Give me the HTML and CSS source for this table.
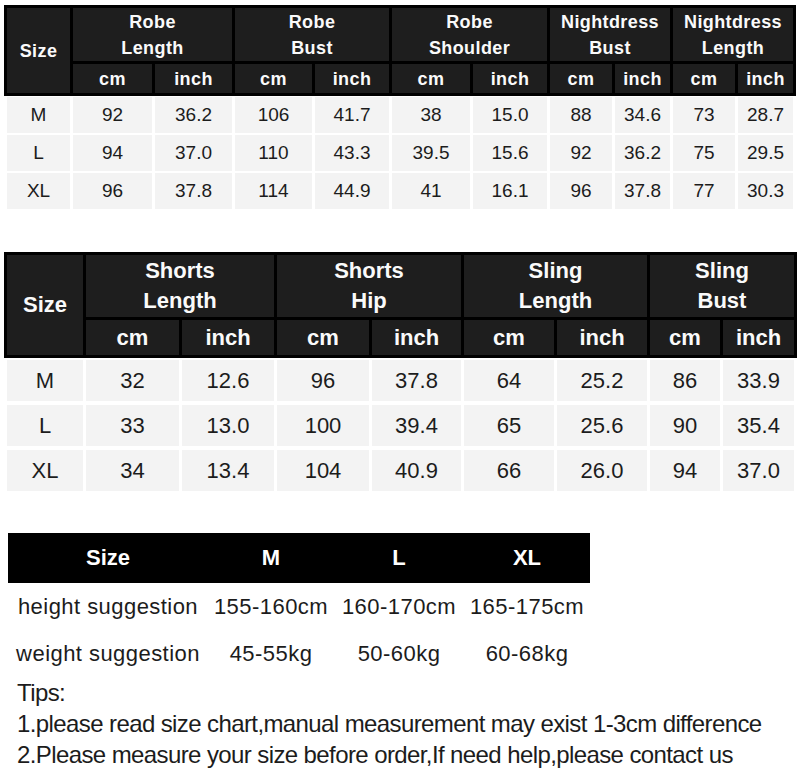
FILE: index.html
```html
<!DOCTYPE html>
<html>
<head>
<meta charset="utf-8">
<link rel="stylesheet" href="styles.css">
</head>
<body>
<div class="page">
  <section class="chart chart-a">
    <div class="head">
      <div class="hc size">Size</div>
      <div class="hc grp">Robe<br>Length</div>
      <div class="hc grp">Robe<br>Bust</div>
      <div class="hc grp">Robe<br>Shoulder</div>
      <div class="hc grp">Nightdress<br>Bust</div>
      <div class="hc grp">Nightdress<br>Length</div>
      <div class="hc">cm</div><div class="hc">inch</div>
      <div class="hc">cm</div><div class="hc">inch</div>
      <div class="hc">cm</div><div class="hc">inch</div>
      <div class="hc">cm</div><div class="hc">inch</div>
      <div class="hc">cm</div><div class="hc">inch</div>
    </div>
    <div class="body">
      <div class="bc">M</div><div class="bc">92</div><div class="bc">36.2</div><div class="bc">106</div><div class="bc">41.7</div><div class="bc">38</div><div class="bc">15.0</div><div class="bc">88</div><div class="bc">34.6</div><div class="bc">73</div><div class="bc">28.7</div>
      <div class="bc">L</div><div class="bc">94</div><div class="bc">37.0</div><div class="bc">110</div><div class="bc">43.3</div><div class="bc">39.5</div><div class="bc">15.6</div><div class="bc">92</div><div class="bc">36.2</div><div class="bc">75</div><div class="bc">29.5</div>
      <div class="bc">XL</div><div class="bc">96</div><div class="bc">37.8</div><div class="bc">114</div><div class="bc">44.9</div><div class="bc">41</div><div class="bc">16.1</div><div class="bc">96</div><div class="bc">37.8</div><div class="bc">77</div><div class="bc">30.3</div>
    </div>
  </section>

  <section class="chart chart-b">
    <div class="head">
      <div class="hc size">Size</div>
      <div class="hc grp">Shorts<br>Length</div>
      <div class="hc grp">Shorts<br>Hip</div>
      <div class="hc grp">Sling<br>Length</div>
      <div class="hc grp">Sling<br>Bust</div>
      <div class="hc">cm</div><div class="hc">inch</div>
      <div class="hc">cm</div><div class="hc">inch</div>
      <div class="hc">cm</div><div class="hc">inch</div>
      <div class="hc">cm</div><div class="hc">inch</div>
    </div>
    <div class="body">
      <div class="bc">M</div><div class="bc">32</div><div class="bc">12.6</div><div class="bc">96</div><div class="bc">37.8</div><div class="bc">64</div><div class="bc">25.2</div><div class="bc">86</div><div class="bc">33.9</div>
      <div class="bc">L</div><div class="bc">33</div><div class="bc">13.0</div><div class="bc">100</div><div class="bc">39.4</div><div class="bc">65</div><div class="bc">25.6</div><div class="bc">90</div><div class="bc">35.4</div>
      <div class="bc">XL</div><div class="bc">34</div><div class="bc">13.4</div><div class="bc">104</div><div class="bc">40.9</div><div class="bc">66</div><div class="bc">26.0</div><div class="bc">94</div><div class="bc">37.0</div>
    </div>
  </section>

  <section class="suggest">
    <div class="sh">Size</div><div class="sh">M</div><div class="sh">L</div><div class="sh">XL</div>
    <div class="sc">height suggestion</div><div class="sc">155-160cm</div><div class="sc">160-170cm</div><div class="sc">165-175cm</div>
    <div class="sc">weight suggestion</div><div class="sc">45-55kg</div><div class="sc">50-60kg</div><div class="sc">60-68kg</div>
  </section>

  <section class="tips">
    <p>Tips:</p>
    <p>1.please read size chart,manual measurement may exist 1-3cm difference</p>
    <p>2.Please measure your size before order,If need help,please contact us</p>
  </section>
</div>
</body>
</html>
```

FILE: styles.css
```css
html, body {
  margin: 0;
  padding: 0;
  background: #fff;
}
body {
  font-family: "Liberation Sans", Arial, sans-serif;
  color: #1c1c1c;
}
.page {
  width: 800px;
  height: 774px;
  overflow: hidden;
  padding-top: 5px;
  box-sizing: border-box;
}
.chart {
  margin-left: 4px;
}
.head {
  display: grid;
  gap: 3px;
  padding: 3px;
  background: #000;
  width: max-content;
}
.hc {
  background: #1e1e1e;
  color: #fafafa;
  font-weight: bold;
  display: flex;
  align-items: center;
  justify-content: center;
  text-align: center;
}
.hc.size {
  grid-row: span 2;
}
.hc.grp {
  grid-column: span 2;
}
.body {
  display: grid;
  column-gap: 3px;
  padding: 0 3px;
  width: max-content;
}
.bc {
  background: #f3f3f3;
  display: flex;
  align-items: center;
  justify-content: center;
}

/* chart A */
.chart-a .head,
.chart-a .body {
  grid-template-columns: 63px 79px 77px 77px 74px 78px 74px 62px 55px 62px 55px;
}
.chart-a .head {
  grid-template-rows: 53px 29px;
}
.chart-a .hc {
  font-size: 18px;
  letter-spacing: 0.4px;
  line-height: 26px;
}
.chart-a .body {
  margin-top: 1px;
  row-gap: 2px;
  grid-template-rows: repeat(3, 36px);
}
.chart-a .bc {
  font-size: 19px;
}

/* chart B */
.chart-b {
  margin-top: 43px;
}
.chart-b .head,
.chart-b .body {
  grid-template-columns: 76px 93px 92px 92px 89px 90px 90px 70px 71px;
}
.chart-b .head {
  grid-template-rows: 62px 35px;
}
.chart-b .hc {
  font-size: 22px;
  line-height: 30px;
}
.chart-b .body {
  margin-top: 2px;
  row-gap: 4px;
  grid-template-rows: repeat(3, 41px);
}
.chart-b .bc {
  font-size: 22px;
}

/* suggestion table */
.suggest {
  margin: 42px 0 0 8px;
  display: grid;
  grid-template-columns: 200px 126px 130px 126px;
  grid-template-rows: 50px 47px 47px;
  width: max-content;
}
.sh {
  background: #000;
  color: #fff;
  font-weight: bold;
  font-size: 22px;
  display: flex;
  align-items: center;
  justify-content: center;
}
.sc {
  font-size: 22px;
  letter-spacing: 0.45px;
  display: flex;
  align-items: center;
  justify-content: center;
  white-space: nowrap;
}

/* tips */
.tips {
  margin-left: 17px;
}
.tips p {
  margin: 0;
  font-size: 24px;
  line-height: 31px;
  letter-spacing: -0.6px;
  white-space: nowrap;
}
```
